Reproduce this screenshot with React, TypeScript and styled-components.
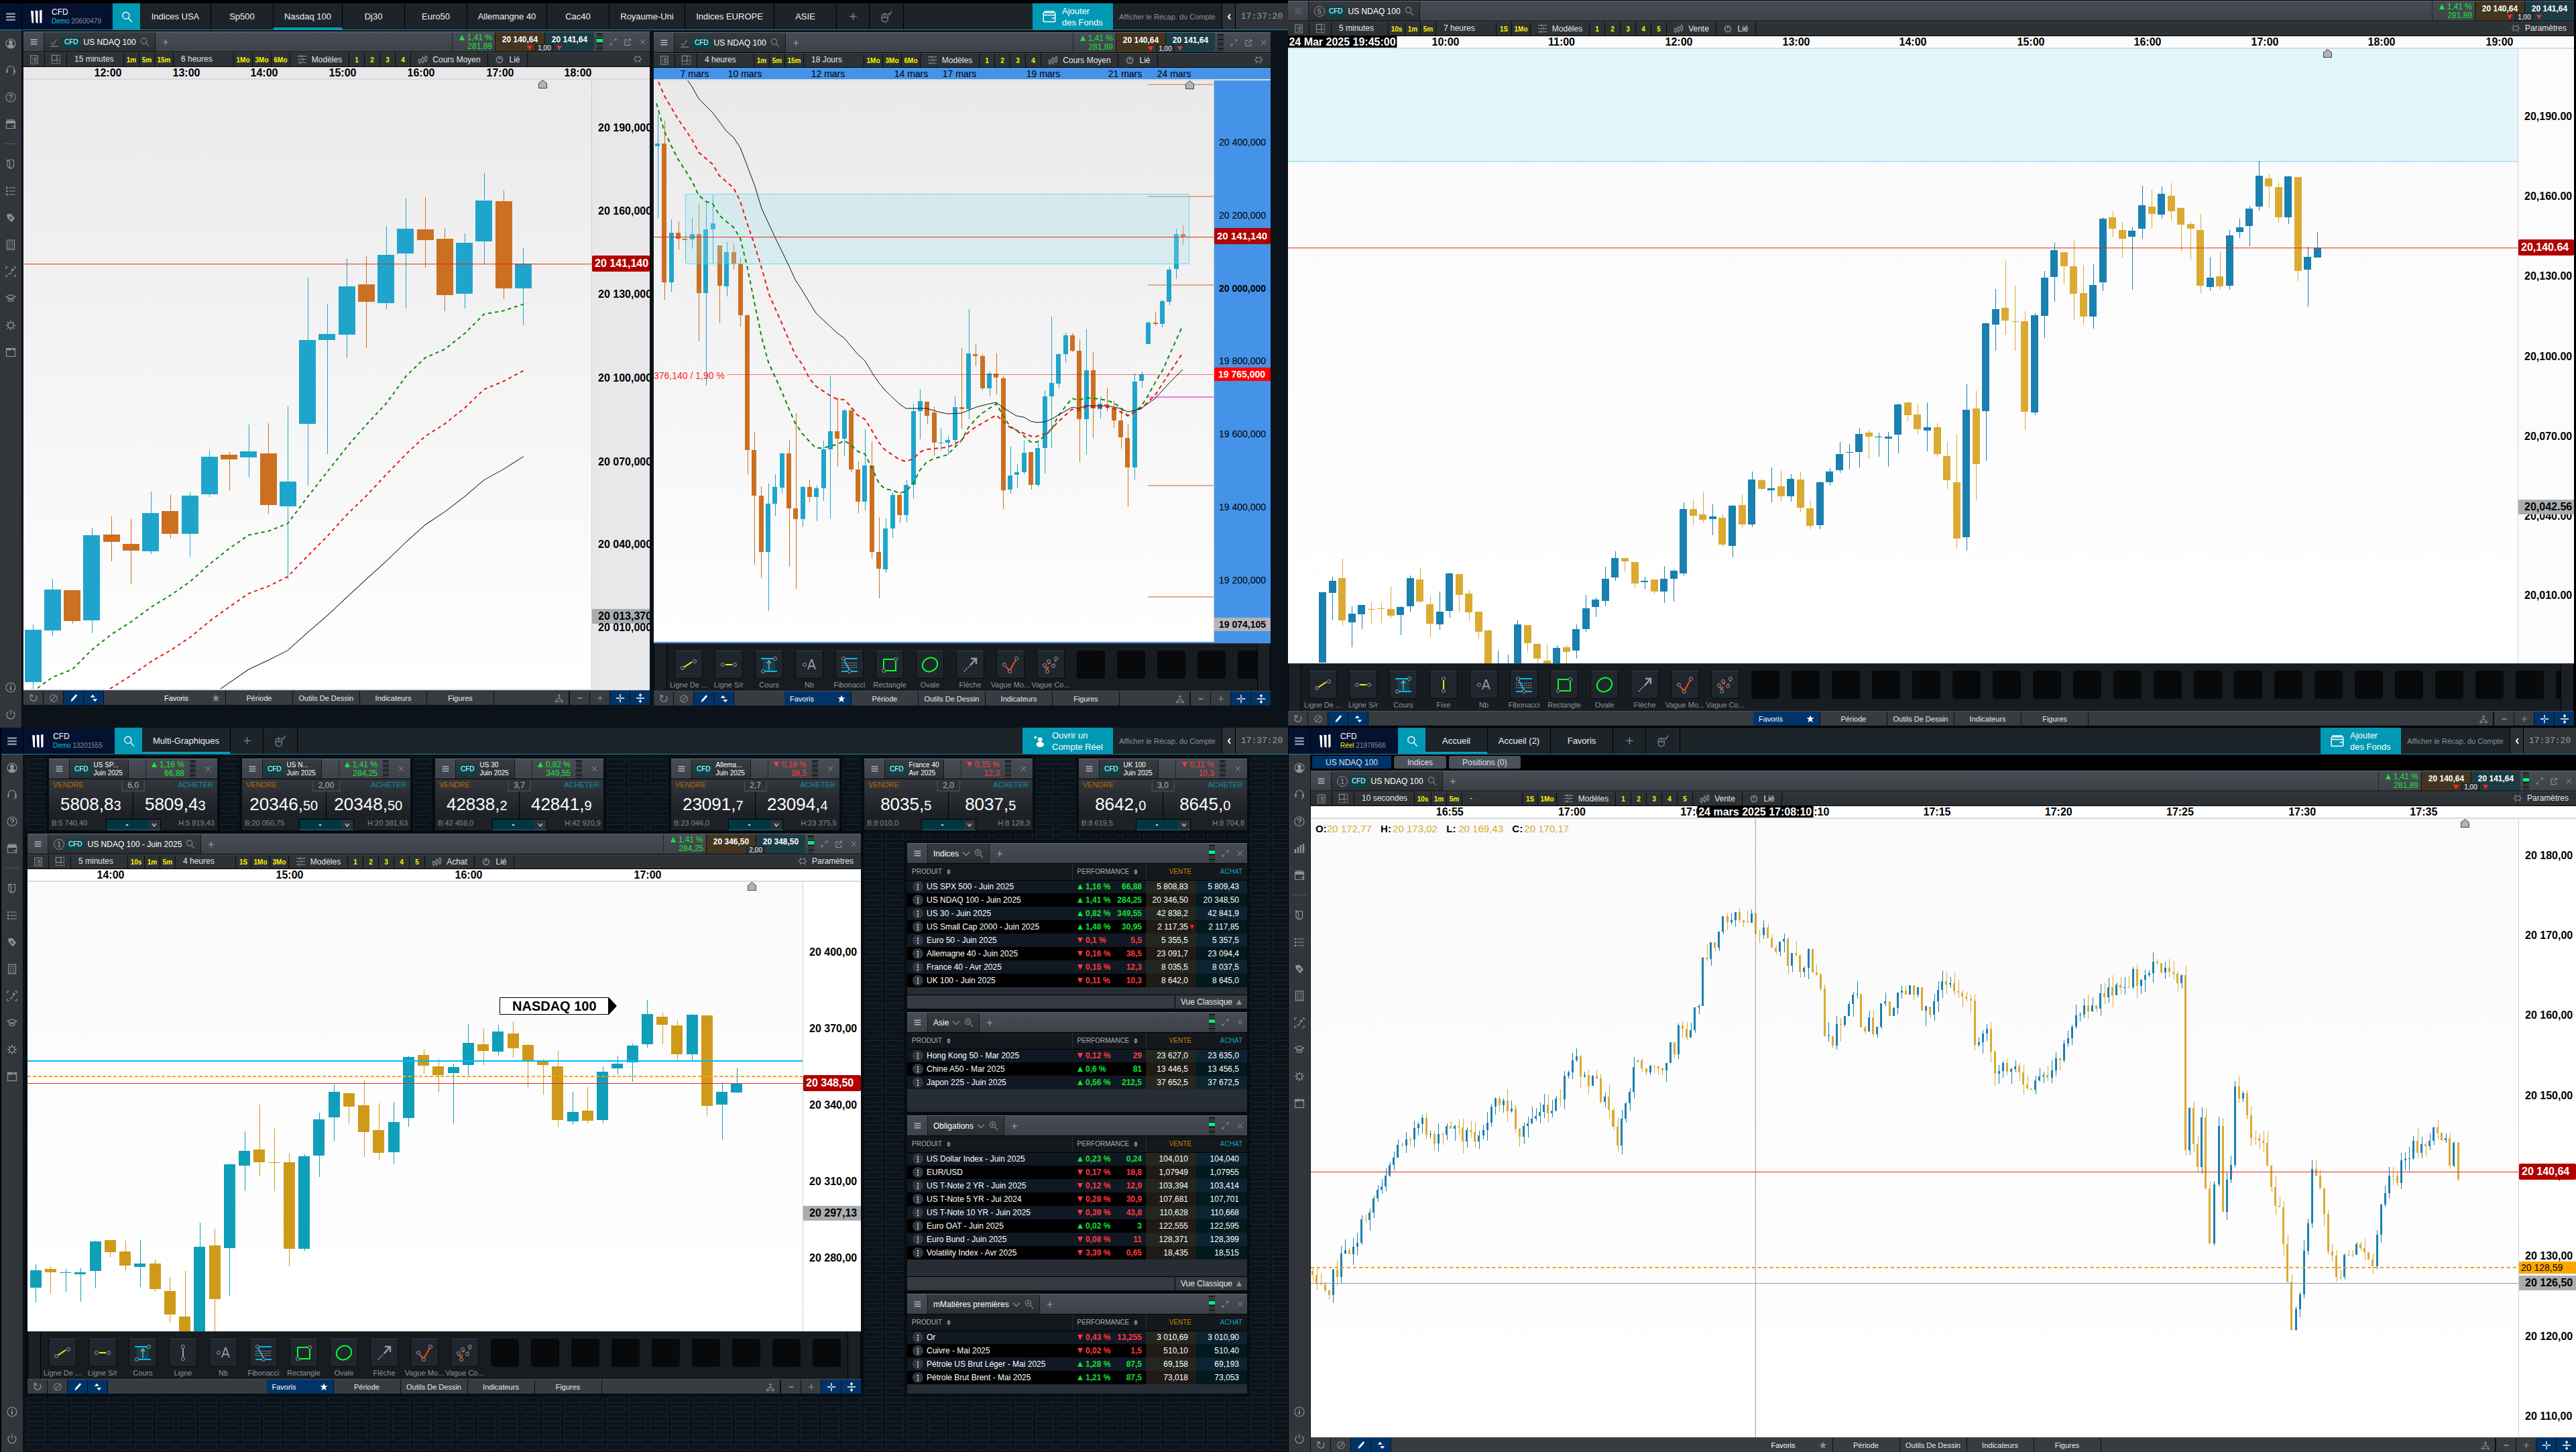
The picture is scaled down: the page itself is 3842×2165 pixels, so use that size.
import React from 'react';
import styled, { createGlobalStyle, css } from 'styled-components';

const GlobalStyle = createGlobalStyle`
  *, *::before, *::after { box-sizing: border-box; }
  body { margin: 0; background: #05080c; font-family: "Liberation Sans", Arial, sans-serif; font-size: 12px; color: #e6e8ea; }
  button, input { font: inherit; color: inherit; border: 0; padding: 0; margin: 0; background: none; }
  a { color: inherit; text-decoration: none; }
  svg { display: block; flex: none; }
`;

/* ---------- icons ---------- */

const iconPaths: Record<string, React.ReactNode> = {
  menu: <path d="M2 4h12M2 8h12M2 12h12" strokeWidth="2" />,
  search: <><circle cx="7" cy="6.5" r="4.5" /><path d="M10.2 9.8L15 15" /></>,
  zoomIn: <><circle cx="7" cy="6.5" r="4.5" /><path d="M10.2 9.8L15 15M5 6.5h4M7 4.5v4" /></>,
  user: <><circle cx="8" cy="8" r="7" /><circle cx="8" cy="6" r="2.4" fill="currentColor" /><path d="M3.5 12.5c1-2.6 2.6-3.2 4.5-3.2s3.5.6 4.5 3.2c-2.4 2.4-6.6 2.4-9 0z" fill="currentColor" /></>,
  headset: <><path d="M2.5 9V7a5.5 5.5 0 0 1 11 0v4a3 3 0 0 1-3 3" /><path d="M2.5 7.5v4M13.5 7.5v4" strokeWidth="2.4" /></>,
  help: <><circle cx="8" cy="8" r="7" /><path d="M5.8 6.4c0-3 4.5-3 4.5-.2C10.3 8 8 7.8 8 9.8M8 11.3v1.4" strokeWidth="1.5" /></>,
  bars: <path d="M2 15V9M6 15V6M10 15V3M14 15V1" strokeWidth="2.4" />,
  card: <><rect x="1.5" y="3.5" width="13" height="11" rx="1" /><path d="M1.5 6.5h13M2 1.8h12M9.5 11h4v3" /><path d="M1.5 5h13" strokeWidth="2.2" /></>,
  ribbon: <><path d="M3 1.5h9.5V11L9 14.5 6.5 12V4z" /><path d="M3 1.5v9L6.5 14.5" /></>,
  list: <><path d="M5.5 3H15M5.5 8H15M5.5 13H15" /><path d="M1 3h2.5M1 8h2.5M1 13h2.5" strokeWidth="2.4" /></>,
  tag: <><path d="M2 2.5l6-1 6 7-5 6-6-7z" fill="currentColor" stroke="none" /><path d="M6 6l4 4M9.5 6.5l-3 3" stroke="#32353a" /></>,
  calc: <><rect x="2.5" y="1" width="11" height="14" /><path d="M4.5 4h7M4.5 7h3M9 7h2.5M4.5 10h3M9 10h2.5M4.5 12.8h3M9 12.8h2.5" /></>,
  scan: <><path d="M1 4V1h3M12 1h3v3M15 12v3h-3M4 15H1v-3" /><path d="M4 11l3 1 4-7M8.5 5.5L11.5 4l.5 3" /></>,
  cap: <path d="M1 5.5L8 2.5l7 3-7 3zM4 7.5V11c2 2 6 2 8 0V7.500M5.500 9.500h5" />,
  gear: <><circle cx="8" cy="8" r="4" /><path d="M8 1v3M8 12v3M1 8h3M12 8h3M3 3l2 2M11 11l2 2M13 3l-2 2M5 11l-2 2" strokeWidth="1.6" /></>,
  hexGear: <path d="M5 4.5h6L13.5 8 11 11.500H5L2.500 8zM5 4.500L3.500 2M11 4.500L12.500 2M5 11.500L3.500 14M11 11.500l1.500 2.500M2.500 8H.5M13.500 8h2" />,
  window: <><rect x="1.5" y="2.5" width="13" height="12" /><path d="M1.5 4h8M11 4h3.5" strokeWidth="2.4" /></>,
  info: <><circle cx="8" cy="8" r="7" /><path d="M8 7v5M8 4v1.5" strokeWidth="2" /></>,
  power: <path d="M4.5 4a6 6 0 1 0 7 0M8 1v7" />,
  plus: <path d="M8 2.5v11M2.5 8h11" strokeWidth="1.6" />,
  minus: <path d="M4 8h8" strokeWidth="2" />,
  mouse: <><rect x="2" y="4" width="8" height="11" rx="4" /><path d="M2 9h8M6 4v5M10.5 3.5l1.5 2 3-5" /></>,
  wallet: <><rect x="1" y="3" width="14" height="11" rx="1" /><path d="M1 6h14M11 9.5h4M2 1.5h12" /></>,
  addUser: <><circle cx="9" cy="6" r="2.6" fill="currentColor" stroke="none" /><ellipse cx="9" cy="12" rx="4.6" ry="3.2" fill="currentColor" stroke="none" /><path d="M1.5 3.5h4M3.5 1.500v4" strokeWidth="1" /></>,
  line: <path d="M2 9l4 3 6-9M1 15h14" />,
  expand: <path d="M9.5 6.5l5-5M11 1.5h3.5V5M6.5 9.5l-5 5M5 14.500H1.500V11" />,
  popout: <path d="M8 3H2.500v11h10V9M7 9l6-6.500M10 2h4v4" />,
  close: <path d="M3 3l10 10M13 3L3 13" />,
  sheet: <><rect x="2" y="1" width="12" height="14" /><path d="M4.5 4.5h1M7 4.5h5M4.5 7h1M7 7h5M4.5 9.500h1M7 9.500h5M4.500 12h1M7 12h5" /></>,
  grid: <><rect x="1.5" y="1.5" width="8" height="8" /><path d="M9.500 1.500h5v13h-13v-5M9.500 9.500v5M9.500 9.500h5" strokeDasharray="1.5 1" /></>,
  sliders: <><path d="M1 3h4M8 3h7M1 8h7M11 8h4M1 13h3M7 13h8" /><path d="M6.500 1v4M9.500 6v4M5.500 11v4" strokeWidth="1.6" /></>,
  candles: <><rect x="1.500" y="8" width="3" height="5" /><rect x="6.500" y="6" width="3" height="6" /><rect x="11.500" y="4" width="3" height="6" /><path d="M3 13v3M8 3v3M8 12v3M13 1v3M13 10v3" /></>,
  link: <><circle cx="8" cy="8" r="5" strokeWidth="2.600" opacity=".7" /><path d="M8 8V4.500" strokeWidth="2" /></>,
  reset: <path d="M4 3.500a5.500 5.500 0 1 0 8 0M1.500 2.500H6v4" strokeWidth="1.6" />,
  ban: <><circle cx="8" cy="8" r="6" /><path d="M12 3.500l-8 9" /></>,
  pencil: <path d="M3 14l1-4 7.500-8.500 2.500 2L6.500 12z" fill="currentColor" stroke="none" />,
  swap: <path d="M2 6.500L6 2l4 4.500zM6 9.500h8L10 14z" fill="currentColor" stroke="none" />,
  star: <path d="M8 .5l2 5.200h5.500L11 9l1.800 6L8 11.500 3.200 15 5 9 .5 5.700H6z" fill="currentColor" stroke="none" />,
  spread: <path d="M8 1v7M5.500 4h5M8 8L3 11.500M8 8l5 3.500M2 13.500h12M4 11.500l-2.500 2L4 15.500M12 11.500l2.500 2-2.500 2" />,
  cross: <path d="M8 1v6M8 9v6M1 8h6M9 8h6" strokeWidth="1.6" />,
  vsplit: <path d="M1 8h14M8 1.500V6M8 10v4.500M6 3.500l2-2.500 2 2.500M6 12.500L8 15l2-2.500" strokeWidth="1.6" />,
};

const Glyph = styled.svg<{ $size: number }>`
  width: ${p => p.$size}px;
  height: ${p => p.$size}px;
  fill: none;
  stroke: currentColor;
  stroke-width: 1.2;
`;

const Icon = ({ name, size = 16 }: { name: string; size?: number }) => (
  <Glyph $size={size} viewBox="0 0 16 16" aria-hidden="true">{iconPaths[name]}</Glyph>
);

/* ---------- page frame ---------- */

const Screen = styled.main`
  display: grid;
  grid-template-columns: 1fr 1fr;
  grid-template-rows: 1085fr 1080fr;
  min-height: 100vh;
  background: #000;
`;

const Workspace = styled.section<{ $pad?: string }>`
  display: flex;
  flex-direction: column;
  min-width: 0;
  padding: ${p => p.$pad || '0'};
  background: #000;
`;

const TopBar = styled.header`
  display: flex;
  height: 40px;
  background: #1c242a;
  border-bottom: 1px solid #1f8694;
`;

const MenuButton = styled.button`
  width: 33px;
  display: grid;
  place-items: center;
  background: #04122f;
  border-right: 1px solid #000;
  color: #9ba1ab;
`;

const Brand = styled.div<{ $width: number }>`
  display: flex;
  align-items: center;
  gap: 14px;
  width: ${p => p.$width}px;
  padding-left: 13px;
  background: #04122f;
  color: #fff;
`;

const BrandText = styled.div`
  font-size: 12px;
  line-height: 13px;
`;

const Account = styled.div<{ $live?: boolean }>`
  font-size: 10px;
  color: #858d9d;
  b { font-weight: 400; color: ${p => (p.$live ? '#ffee00' : '#12c3e6')}; }
`;

const SearchButton = styled.button`
  width: 41px;
  display: grid;
  place-items: center;
  background: #0099b4;
  color: #fff;
`;

const TopTab = styled.a<{ $width: number; $active?: boolean }>`
  display: grid;
  place-items: center;
  width: ${p => p.$width}px;
  border-right: 1px solid #000;
  font-size: 13px;
  color: #eef0f2;
  padding-top: ${p => (p.$active ? 3 : 0)}px;
  ${p => p.$active && css`border-bottom: 3px solid #00a0ba;`}
`;

const TopIcon = styled.button<{ $width: number }>`
  display: grid;
  place-items: center;
  width: ${p => p.$width}px;
  border-right: 1px solid #000;
  color: #7b8188;
`;

const Spacer = styled.div`
  flex: 1;
  min-width: 0;
`;

const CallToAction = styled.button<{ $width: number }>`
  display: flex;
  align-items: center;
  gap: 9px;
  width: ${p => p.$width}px;
  padding-left: 15px;
  background: #0099b4;
  color: #fff;
  font-size: 13px;
  line-height: 17px;
  text-align: left;
  white-space: pre-line;
`;

const Recap = styled.button`
  width: 163px;
  border-right: 1px solid #000;
  font-size: 11px;
  color: #8b9196;
`;

const Collapse = styled.button`
  width: 20px;
  display: grid;
  place-items: center;
  background: #2b3035;
  border-right: 1px solid #000;
  color: #fff;
`;

const Clock = styled.time`
  width: 78px;
  display: grid;
  place-items: center;
  background: #2f3337;
  color: #999da0;
  font-family: "Liberation Mono", monospace;
  font-size: 13px;
`;

type TabDef = { label: string; width: number; active?: boolean };

const Header = ({ brandWidth, account, live, tabs, cta, ctaIcon, ctaWidth }: {
  brandWidth: number; account: string; live?: boolean; tabs: TabDef[]; cta: string; ctaIcon: string; ctaWidth: number;
}) => (
  <TopBar>
    <MenuButton aria-label="Menu"><Icon name="menu" size={18} /></MenuButton>
    <Brand $width={brandWidth}>
      <svg width="17" height="20" viewBox="0 0 17 20" aria-hidden="true">
        <path d="M0 1l4 .5V20L1.500 18.500zM6.500 .5l4 .5v19l-3-1.500zM13 .5l3.500-.5v18.500l-3 1.500z" fill="#fff" />
      </svg>
      <BrandText>
        CFD
        <Account $live={live}><b>{live ? 'Réel' : 'Demo'}</b> {account}</Account>
      </BrandText>
    </Brand>
    <SearchButton aria-label="Rechercher"><Icon name="search" size={18} /></SearchButton>
    {tabs.map(t => <TopTab key={t.label} href="#" $width={t.width} $active={t.active}>{t.label}</TopTab>)}
    <TopIcon $width={49} aria-label="Ajouter"><Icon name="plus" size={15} /></TopIcon>
    <TopIcon $width={51} aria-label="Souris"><Icon name="mouse" size={18} /></TopIcon>
    <Spacer />
    <CallToAction $width={ctaWidth}><Icon name={ctaIcon} size={20} />{cta}</CallToAction>
    <Recap>Afficher le Récap. du Compte</Recap>
    <Collapse aria-label="Réduire">
      <svg width="6" height="8" viewBox="0 0 6 8"><path d="M5 0L2 4l3 4" fill="none" stroke="#fff" strokeWidth="2" /></svg>
    </Collapse>
    <Clock>17:37:20</Clock>
  </TopBar>
);

const Body = styled.div`
  display: flex;
  flex: 1;
  min-height: 0;
`;

const Side = styled.nav`
  display: flex;
  flex-direction: column;
  width: 33px;
  background: #32353a;
  border-right: 1px solid #0a0d10;
  color: #8f9499;
`;

const SideButton = styled.button`
  display: grid;
  place-items: center;
  height: 40px;
`;

const Divider = styled.hr`
  width: 20px;
  height: 1px;
  margin: 9px auto 10px;
  border: 0;
  background: #565a5f;
`;

const Sidebar = ({ live }: { live?: boolean }) => (
  <Side>
    {['user', 'headset', 'help', ...(live ? ['bars'] : []), 'card'].map(n => <SideButton key={n} aria-label={n}><Icon name={n} /></SideButton>)}
    <Divider />
    {['ribbon', 'list', 'tag', 'calc', 'scan', 'cap', 'gear', 'window'].map(n => <SideButton key={n} aria-label={n}><Icon name={n} /></SideButton>)}
    <Spacer />
    {['info', 'power'].map(n => <SideButton key={n} aria-label={n}><Icon name={n} /></SideButton>)}
  </Side>
);

/* ---------- panel chrome ---------- */

const Panel = styled.article`
  display: flex;
  flex-direction: column;
  min-width: 0;
  min-height: 0;
  background: #000;
`;

const PanelHead = styled.header`
  display: flex;
  height: 31px;
  background: linear-gradient(#484d55, #3d4148);
  border-top: 1px solid #666973;
  border-bottom: 1px solid #000;
  color: #9a9ea4;
`;

const Grip = styled.button<{ $dim?: boolean }>`
  display: grid;
  place-items: center;
  width: 31px;
  border-right: 1px solid #17191c;
  color: ${p => (p.$dim ? '#5f646b' : '#b4b8bd')};
`;

const PanelTab = styled.div<{ $width?: number }>`
  display: flex;
  align-items: center;
  gap: 5px;
  width: ${p => (p.$width ? `${p.$width}px` : 'auto')};
  padding: 0 8px 0 ${p => (p.$width ? 4 : 8)}px;
  background: linear-gradient(#373b40, #2b2f33);
  border-right: 1px solid #17191c;
  color: #fff;
  white-space: nowrap;
  > svg { color: #878c92; }
`;

const Badge = styled.span`
  padding: 0 3px;
  border-radius: 3px;
  background: #00474f;
  color: #fff;
  font-size: 10px;
  line-height: 16px;
`;

const Circled = styled.span`
  display: grid;
  place-items: center;
  width: 16px;
  height: 16px;
  margin-right: -2px;
  border: 1px solid #8d9196;
  border-radius: 8px;
  font-size: 11px;
  color: #9ca0a5;
`;

const HeadButton = styled.button<{ $width?: number }>`
  display: grid;
  place-items: center;
  width: ${p => p.$width || 22}px;
  color: #a4a8ad;
`;

const Perf = styled.div<{ $down?: boolean; $width?: number }>`
  width: ${p => p.$width || 64}px;
  padding: 2px 4px 0 0;
  border-left: 1px solid #22252a;
  text-align: right;
  line-height: 13px;
  white-space: nowrap;
  color: ${p => (p.$down ? '#ff3b3b' : '#19e639')};
`;

const Prices = styled.div`
  position: relative;
  display: flex;
`;

const Price = styled.button<{ $buy?: boolean }>`
  width: 74px;
  height: 29px;
  padding-bottom: 8px;
  border-left: 1px solid #111;
  background: ${p => (p.$buy ? '#1c3c45' : '#443520')};
  font-weight: 700;
  color: #fff;
`;

const SpreadTag = styled.span`
  position: absolute;
  left: 50%;
  bottom: 0;
  transform: translateX(-50%);
  padding: 0 3px;
  background: #2e3339;
  border: 1px solid #15181b;
  border-bottom: 0;
  font-size: 10px;
  line-height: 10px;
  color: #f0f2f4;
`;

const Drop = styled.i<{ $right?: boolean }>`
  position: absolute;
  bottom: 2px;
  left: ${p => (p.$right ? 92 : 48)}px;
  border: 4px solid transparent;
  border-top: 7px solid #ff2a2a;
  border-bottom: 0;
`;

const GaugeBox = styled.span`
  display: flex;
  flex-direction: column;
  gap: 1px;
  width: 9px;
  margin: 2px 4px 0;
  i { height: 6px; background: #33373c; border-top: 1px solid #000; }
  i.on { background: #00f07c; }
`;

const Gauge = ({ on }: { on?: boolean }) => (
  <GaugeBox aria-hidden="true"><i /><i className={on ? 'on' : ''} /><i /><i /></GaugeBox>
);

const ToolRow = styled.div`
  display: flex;
  height: 22px;
  background: #2d3236;
  border-top: 1px solid #4a4e53;
  border-bottom: 1px solid #000;
  color: #8d9297;
`;

const ToolCell = styled.button<{ $width: number; $left?: boolean }>`
  display: flex;
  align-items: center;
  justify-content: ${p => (p.$left ? 'flex-start' : 'center')};
  gap: 7px;
  width: ${p => p.$width}px;
  padding: ${p => (p.$left ? '0 0 2px 11px' : '0 0 1px')};
  border-right: 1px solid #0b0d0f;
  white-space: nowrap;
  span { color: #e4e6e8; }
`;

const Quick = styled.button<{ $width?: number }>`
  width: ${p => p.$width || 23}px;
  border-right: 1px solid #0b0d0f;
  font-size: 10px;
  font-weight: 700;
  color: #fff200;
`;

const Settings = styled.button`
  display: flex;
  align-items: center;
  gap: 7px;
  padding: 0 11px 2px;
  span { color: #e4e6e8; }
`;

type ToolbarDef = {
  unit: string; unitWidth: number; quick: [string, number?][]; span: string; spanWidth: number;
  periods: [string, number?][]; models: string[]; price: string; priceWidth: number; settings?: boolean;
};

const Toolbar = ({ d }: { d: ToolbarDef }) => (
  <ToolRow>
    <ToolCell $width={32} aria-label="Liste"><Icon name="sheet" size={14} /></ToolCell>
    <ToolCell $width={33} aria-label="Disposition"><Icon name="grid" size={15} /></ToolCell>
    <ToolCell $width={d.unitWidth} $left><span>{d.unit}</span></ToolCell>
    {d.quick.map(([q, w]) => <Quick key={q} $width={w}>{q}</Quick>)}
    <ToolCell $width={d.spanWidth} $left><span>{d.span}</span></ToolCell>
    {d.periods.map(([q, w]) => <Quick key={q} $width={w}>{q}</Quick>)}
    <ToolCell $width={88}><Icon name="sliders" size={15} /><span>Modèles</span></ToolCell>
    {d.models.map(m => <Quick key={m}>{m}</Quick>)}
    <ToolCell $width={d.priceWidth}><Icon name="candles" size={15} /><span>{d.price}</span></ToolCell>
    <ToolCell $width={59}><Icon name="link" size={14} /><span>Lié</span></ToolCell>
    <Spacer />
    <Settings aria-label="Paramètres"><Icon name="hexGear" size={14} />{d.settings && <span>Paramètres</span>}</Settings>
  </ToolRow>
);

const FootRow = styled.footer`
  display: flex;
  height: 22px;
  background: #373b42;
  border-top: 1px solid #4c5057;
  color: #e8eaec;
`;

const FootIcon = styled.button<{ $on?: boolean; $right?: boolean }>`
  display: grid;
  place-items: center;
  width: 30px;
  ${p => (p.$right ? 'border-left' : 'border-right')}: 1px solid #0e1013;
  background: ${p => (p.$on ? '#003468' : 'transparent')};
  color: ${p => (p.$on ? '#fff' : '#8c9096')};
`;

const FootTabs = styled.div`
  display: flex;
  flex: 1;
  justify-content: center;
`;

const FootTab = styled.button<{ $on?: boolean }>`
  display: flex;
  align-items: center;
  justify-content: center;
  width: 100px;
  border-right: 1px solid #0e1013;
  font-size: 11px;
  background: ${p => (p.$on ? '#003468' : 'transparent')};
  &:first-child { justify-content: space-between; padding: 0 8px; color: #fff; }
  &:first-child svg { color: ${p => (p.$on ? '#fff' : '#8c9096')}; }
`;

const Footer = ({ fav }: { fav?: boolean }) => (
  <FootRow>
    <FootIcon aria-label="Réinitialiser"><Icon name="reset" size={14} /></FootIcon>
    <FootIcon aria-label="Masquer"><Icon name="ban" size={14} /></FootIcon>
    <FootIcon $on aria-label="Dessiner"><Icon name="pencil" size={14} /></FootIcon>
    <FootIcon $on aria-label="Permuter"><Icon name="swap" size={14} /></FootIcon>
    <FootTabs>
      <FootTab $on={fav}>Favoris<Icon name="star" size={12} /></FootTab>
      <FootTab>Période</FootTab>
      <FootTab>Outils De Dessin</FootTab>
      <FootTab>Indicateurs</FootTab>
      <FootTab>Figures</FootTab>
    </FootTabs>
    <FootIcon aria-label="Étendre"><Icon name="spread" size={14} /></FootIcon>
    <FootIcon $right aria-label="Dézoomer"><Icon name="minus" size={14} /></FootIcon>
    <FootIcon $right aria-label="Zoomer"><Icon name="plus" size={12} /></FootIcon>
    <FootIcon $right $on aria-label="Croix"><Icon name="cross" size={14} /></FootIcon>
    <FootIcon $right $on aria-label="Séparer"><Icon name="vsplit" size={14} /></FootIcon>
  </FootRow>
);

/* ---------- drawing tools strip ---------- */

const Strip = styled.div`
  display: flex;
  height: 71px;
  background: #171c20;
  border-top: 1px solid #34383c;
`;

const StripEnd = styled.div`
  width: 20px;
  background: #1b2026;
  border: 1px solid #000;
  border-width: 0 1px;
`;

const StripItems = styled.div`
  display: flex;
  flex: 1;
  gap: 4px;
  min-width: 0;
  overflow: hidden;
  padding: 10px 0 0 4px;
`;

const Tool = styled.button`
  display: flex;
  flex: none;
  flex-direction: column;
  align-items: center;
  gap: 3px;
  width: 56px;
  font-size: 11px;
  line-height: 13px;
  white-space: nowrap;
  color: #8f949b;
`;

const ToolFace = styled.span<{ $empty?: boolean }>`
  display: grid;
  place-items: center;
  width: 42px;
  height: 42px;
  border-radius: 4px;
  background: ${p => (p.$empty ? '#08090a' : '#20262d')};
  border: 1px solid ${p => (p.$empty ? '#08090a' : '#0a0c0e')};
  ${p => !p.$empty && css`border-top-color: #3b4046;`}
`;

const Dot = ({ x, y }: { x: number; y: number }) => <circle cx={x} cy={y} r="2.5" fill="#20262d" stroke="#9a9da1" />;

const toolFaces: Record<string, React.ReactNode> = {
  'Ligne De ...': <><path d="M6 18L18 10" stroke="#ffee00" strokeWidth="2" /><Dot x={4} y={19} /><Dot x={22} y={9} /></>,
  'Ligne S/r': <><path d="M8 14h10" stroke="#ffee00" strokeWidth="2" /><Dot x={4} y={14} /><Dot x={22} y={14} /></>,
  Cours: <><rect x="4" y="6" width="18" height="18" fill="#12414f" /><path d="M1 5h20M5 24h20" stroke="#00b8ff" strokeWidth="2" /><path d="M13 22V8M10 12l3-4 3 4" stroke="#9a9da1" strokeWidth="1.5" /><Dot x={22} y={5} /><Dot x={4} y={24} /></>,
  Fixe: <><path d="M13 8v12" stroke="#ffee00" strokeWidth="2" /><Dot x={13} y={5} /><Dot x={13} y={23} /></>,
  Ligne: <><path d="M13 8v12" stroke="#c9ccd0" strokeWidth="1.5" /><Dot x={13} y={5} /><Dot x={13} y={23} /></>,
  Nb: <><Dot x={6} y={14} /><path d="M11 21l5-14h1l5 14M13 16.500h7" stroke="#9a9da1" strokeWidth="1.8" /></>,
  Fibonacci: <><path d="M4 5h21M1 24h24M4 5l10 19" stroke="#00b8ff" strokeWidth="2" /><path d="M1 11.500h24M1 15h24M1 18.500h24" stroke="#9a9da1" strokeDasharray="2 1" /><Dot x={4} y={5} /><Dot x={13} y={24} /></>,
  Rectangle: <><path d="M4 6h18v17H4z" stroke="#00ff2a" strokeWidth="2" /><Dot x={22} y={6} /><Dot x={4} y={23} /></>,
  Ovale: <ellipse cx="13" cy="14" rx="11.5" ry="10" transform="rotate(-30 13 14)" stroke="#00ff2a" strokeWidth="2" />,
  'Flèche': <><path d="M4 24L14 14" stroke="#9a9da1" strokeWidth="2" strokeDasharray="2 2" /><path d="M13 15l8-9M14 5h8v8" stroke="#9a9da1" strokeWidth="2.4" /></>,
  'Vague Mo...': <><path d="M6 17l6 6 9-16" stroke="#ff4a12" strokeWidth="2" /><Dot x={4} y={14} /><Dot x={12} y={24} /><Dot x={22} y={5} /></>,
  'Vague Co...': <><path d="M4 16l4 6 3-11 6 4 4-8" stroke="#ff4a12" strokeWidth="2" strokeDasharray="5 3" /><Dot x={4} y={15} /><Dot x={8} y={24} /><Dot x={10} y={9} /><Dot x={17} y={16} /><Dot x={21} y={5} /></>,
};

const DrawingTools = ({ names, slots }: { names: string[]; slots: number }) => (
  <Strip>
    <StripEnd />
    <StripItems>
      {names.map(n => (
        <Tool key={n}>
          <ToolFace><svg width="27" height="28" viewBox="0 0 27 28" fill="none" aria-hidden="true">{toolFaces[n]}</svg></ToolFace>
          {n}
        </Tool>
      ))}
      {Array.from({ length: slots }, (_, i) => <Tool key={i} aria-label="Emplacement libre"><ToolFace $empty /></Tool>)}
    </StripItems>
    <StripEnd />
  </Strip>
);

/* ---------- charts ---------- */

const ChartGrid = styled.div<{ $axis: number }>`
  display: grid;
  grid-template-columns: minmax(0, 1fr) ${p => p.$axis}px;
  grid-template-rows: 19px minmax(0, 1fr);
  flex: 1;
  min-height: 0;
  overflow: hidden;
`;

const TimeAxis = styled.div<{ $bg: string }>`
  grid-column: 1 / 3;
  display: grid;
  grid-template-columns: subgrid;
  background: ${p => p.$bg};
  border-bottom: 2px solid #d9dadb;
  overflow: hidden;
`;

const Track = styled.div`
  position: relative;
`;

const TimeLabel = styled.span<{ $light?: boolean; $boxed?: boolean }>`
  position: absolute;
  transform: translateX(-50%);
  white-space: nowrap;
  color: #000;
  font-size: ${p => (p.$light ? 14 : 16)}px;
  font-weight: ${p => (p.$light ? 400 : 700)};
  line-height: 18px;
  ${p => p.$boxed && css`padding: 0 2px; background: #000; color: #fff; z-index: 1; line-height: 17px;`}
`;

const Plot = styled.div<{ $bg: string }>`
  position: relative;
  min-height: 0;
  background: ${p => p.$bg};
  > svg { position: absolute; inset: 0; width: 100%; height: 100%; }
`;

const PriceAxis = styled.div<{ $bg: string }>`
  position: relative;
  background: ${p => p.$bg};
  border-left: 1px solid #cfd0d2;
  overflow: hidden;
`;

type PriceKind = 'plain' | 'light' | 'bold14' | 'last' | 'last14' | 'alert' | 'gray' | 'gray14' | 'amber';

const PriceLabel = styled.span<{ $kind: PriceKind }>`
  position: absolute;
  left: 0;
  right: 0;
  transform: translateY(-50%);
  padding-left: 9px;
  white-space: nowrap;
  color: #000;
  font-size: 16px;
  font-weight: 700;
  line-height: 20px;
  ${p => p.$kind === 'light' && css`font-size: 14px; font-weight: 400; padding-left: 7px;`}
  ${p => p.$kind === 'bold14' && css`font-size: 14px; padding-left: 7px;`}
  ${p => p.$kind === 'gray14' && css`font-size: 14px; padding-left: 7px; background: #b5b3ba;`}
  ${p => p.$kind === 'gray' && css`background: #a9adb0; line-height: 22px;`}
  ${p => p.$kind === 'alert' && css`font-size: 14px; padding-left: 6px; background: #ff0000; color: #fff;`}
  ${p => p.$kind === 'amber' && css`font-size: 14px; font-weight: 400; padding-left: 3px; background: #ffa500; line-height: 18px;`}
  ${p => (p.$kind === 'last' || p.$kind === 'last14') && css`
    padding-left: 4px; background: #b00000; color: #fff; border-radius: 2px; line-height: 24px;`}
  ${p => p.$kind === 'last14' && css`font-size: 15px;`}
`;

const Marker = styled.i`
  position: absolute;
  top: 0;
  width: 13px;
  height: 13px;
  margin-left: -6px;
  background: #444;
  clip-path: polygon(50% 0, 100% 40%, 100% 100%, 0 100%, 0 40%);
  &::after {
    content: "";
    position: absolute;
    inset: 1px;
    background: #b3b3b3;
    clip-path: inherit;
  }
`;

type Candle = { up: boolean; top: number; bottom: number; high: number; low: number };

const parseCandles = (text: string): Candle[] =>
  text.split(';').map(row => {
    const [top, bottom, high, low] = row.slice(1).split(',').map(Number);
    return { up: row[0] === 'u', top, bottom, high, low };
  });

const Candles = ({ data, x0, pitch, width, up, down }: {
  data: Candle[]; x0: number; pitch: number; width: number; up: string; down: string;
}) => (
  <g shapeRendering="crispEdges">
    {data.map((c, i) => {
      const x = x0 + i * pitch;
      return (
        <g key={i} fill={c.up ? up : down}>
          <rect x={Math.round(x)} y={c.high} width="1" height={Math.max(0, c.low - c.high)} />
          <rect x={Math.round(x - width / 2)} y={c.top} width={width} height={Math.max(1, c.bottom - c.top)} />
        </g>
      );
    })}
  </g>
);

const Chart = ({ view, axis, axisBg, plotBg, times, prices, marker, light, children }: {
  view: [number, number, number, number]; axis: number; axisBg: string; plotBg: string;
  times: [string, number, boolean?][]; prices: [string, number, PriceKind?][]; marker: number; light?: boolean; children: React.ReactNode;
}) => {
  const [vx, vy, vw, vh] = view;
  const left = (x: number) => ({ left: `${((x - vx) / vw) * 100}%` });
  return (
    <ChartGrid $axis={axis}>
      <TimeAxis $bg={axisBg}>
        <Track>{times.map(([t, x, boxed]) => <TimeLabel key={t} $light={light} $boxed={boxed} style={left(x)}>{t}</TimeLabel>)}</Track>
      </TimeAxis>
      <Plot $bg={plotBg}>
        <svg viewBox={view.join(' ')} preserveAspectRatio="none">{children}</svg>
        <Marker style={left(marker)} />
      </Plot>
      <PriceAxis $bg={axisBg}>
        {prices.map(([p, y, kind]) => (
          <PriceLabel key={p} $kind={kind || 'plain'} style={{ top: `${((y - vy) / vh) * 100}%` }}>{p}</PriceLabel>
        ))}
      </PriceAxis>
    </ChartGrid>
  );
};

/* ---------- price series ---------- */

const ndaq15m = parseCandles(`u938,1016,930,1026;u878,939,862,948;d879,925,879,929;u797,924,786,943;d796,807,769,836;d810,820,773,870;u764,821,732,825;d761,795,737,802;u738,795,733,829;u680,736,670,740;d677,684,673,730;u672,681,632,710;d675,752,630,765;u717,754,605,863;u507,631,414,723;u498,507,453,676;u427,499,386,534;d424,450,382,519;u380,452,337,461;u341,378,296,460;d342,358,294,399;d356,440,340,464;u362,438,348,460;u299,360,258,393;d300,430,284,446;u393,430,370,485`);

const ndaq4h = parseCandles(`u214,218,170,325;d214,421,180,447;u347,421,327,435;d347,356,330,372;d356,358,345,386;u349,357,325,371;d349,437,303,509;u342,437,300,575;u333,342,291,393;d366,426,366,482;u376,427,361,442;d376,393,363,402;d393,470,385,487;d470,671,469,707;d671,739,644,842;d739,823,725,862;u751,823,721,911;u726,751,707,769;u676,727,675,735;d676,758,656,845;d758,774,616,878;u726,774,725,786;d726,741,715,749;u728,741,724,777;u670,728,657,747;u643,670,560,773;d643,654,593,696;u612,654,610,680;d612,700,607,704;d700,748,688,765;u694,748,640,761;d694,823,658,833;d823,848,771,892;u788,849,773,854;u738,788,734,802;d738,768,734,780;u723,768,716,779;u613,723,602,743;u598,613,580,655;d599,620,599,632;d615,660,606,679;u660,661,638,672;u656,660,650,678;u607,656,591,668;d607,610,519,639;u527,610,461,625;d528,531,512,546;d531,579,528,582;u557,579,554,591;d557,563,527,588;d564,731,561,759;u709,730,666,736;u704,708,692,728;u675,704,657,707;d674,723,674,730;u668,723,660,726;u591,668,582,706;u571,591,472,668;u528,572,527,579;u500,528,496,540;d500,523,497,525;d523,625,506,689;u552,625,491,678;d552,609,524,653;u602,610,591,624;d603,605,578,614;d608,627,597,638;d627,652,609,669;d653,697,633,755;u569,697,557,715;u558,568,554,578;u481,513,479,513;d481,483,465,486;u449,483,447,488;u402,450,398,455;u349,401,341,416;d349,354,336,365`);

const ndaq5m = parseCandles(`u882,987,882,987;u865,883,859,924;d861,924,832,932;u914,927,903,964;u901,915,901,937;d907,908,897,930;d906,907,898,928;d907,917,874,921;u904,916,903,946;u861,903,857,912;d863,896,846,897;d900,929,888,949;u911,930,881,938;u854,910,853,920;d855,886,855,911;d884,912,879,925;d911,941,911,952;d939,988,938,988;u988,988,969,988;u988,988,975,988;u930,988,924,988;d931,958,931,972;d959,981,959,988;d984,988,960,988;u965,988,961,988;d964,971,961,988;u937,969,930,981;u906,937,886,941;u893,904,890,919;u862,895,844,903;u831,860,821,865;d831,836,831,851;d837,869,837,876;u865,867,859,877;d863,881,863,885;u862,881,843,898;u850,862,848,896;u758,854,748,857;d758,768,744,782;d766,774,732,779;u769,773,751,797;d771,811,766,814;u753,813,752,830;d752,781,736,786;u714,781,702,785;d715,728,713,730;u727,730,696,748;d724,739,701,747;u713,739,706,747;d714,756,702,763;d757,783,745,788;u718,782,717,788;u702,718,697,723;u676,700,658,704;u673,674,661,699;u646,673,637,696;d644,650,640,683;u650,651,644,680;u650,653,643,695;u602,647,601,675;d599,618,599,627;d617,639,601,647;u636,641,599,672;d636,676,630,680;d679,715,658,728;d718,802,647,817;u610,800,572,820;d608,691,582,745;u482,612,481,686;u461,484,431,523;d459,478,389,499;d479,480,426,523;d479,613,464,640;u470,614,467,618;u414,471,404,504;u373,413,362,450;d376,397,376,423;d397,438,358,477;d437,472,395,484;u425,472,394,490;u326,421,324,434;d324,341,315,353;d343,356,331,384;u344,353,339,432;u306,341,277,356;d308,319,283,341;u289,320,278,326;d292,315,273,329;d310,335,309,375;d334,341,331,387;d343,426,319,437;u414,428,383,434;d412,427,375,432;u351,426,343,432;u339,346,326,355;u311,337,307,367;u262,308,240,314;d266,278,260,309;d279,324,272,332;u263,324,262,334;d264,404,264,419;u383,402,368,457;u369,384,346,384`);

/* The June contract follows the index on a slightly flatter scale; its premium was smaller earlier in the session. */
const juin5m = ndaq5m.slice(55).map((c, i) => {
  const lag = i <= 17 ? 13 : Math.max(0, 13 - (i - 17) * 1.3);
  const y = (v: number) => Math.round(1615 + (v - 369) * 0.959 + lag);
  return { up: c.up, top: y(c.top), bottom: y(c.bottom), high: y(c.high), low: y(c.low) };
});

/* Ten-second bars built between turning points given as [bar index, level]. */
const barsBetween = (points: [number, number][], seed: number): Candle[] => {
  let state = seed;
  const random = () => {
    state = (state * 1103515245 + 12345) % 2147483648;
    return state / 2147483648;
  };
  const bars: Candle[] = [];
  let open = points[0][1];
  for (let p = 1; p < points.length; p += 1) {
    const [from, a] = points[p - 1];
    const [to, b] = points[p];
    for (let i = from; i < to; i += 1) {
      const close = Math.round(a + ((b - a) * (i + 1 - from)) / (to - from) + (random() - 0.5) * 26);
      const top = Math.min(open, close);
      const bottom = Math.max(open, close);
      bars.push({ up: close < open, top, bottom, high: Math.round(top - random() * 18), low: Math.round(bottom + random() * 18) });
      open = close;
    }
  }
  return bars;
};

const morning = barsBetween([[0, 1895], [3, 1905], [5, 1918], [8, 1880], [12, 1845], [16, 1785], [20, 1735], [24, 1690], [28, 1680], [32, 1702], [35, 1676], [38, 1692], [41, 1690], [44, 1668], [47, 1640], [50, 1660], [52, 1690], [57, 1655], [60, 1665], [64, 1600], [66, 1580], [68, 1612], [71, 1618], [74, 1655], [76, 1700], [79, 1635], [80, 1590]], 7);

const peak = parseCandles(`u1582,1582,1580,1583;d1581,1593,1578,1598;d1593,1599,1593,1603;u1589,1599,1588,1603;d1589,1590,1589,1600;d1590,1593,1590,1603;d1593,1596,1592,1603;u1585,1596,1585,1613;u1554,1585,1554,1585;d1554,1572,1554,1577;u1529,1572,1526,1579;d1529,1534,1523,1547;d1534,1547,1524,1551;u1536,1547,1525,1547;u1502,1536,1502,1540;u1500,1502,1497,1512;u1428,1500,1427,1500;d1428,1430,1408,1433;u1405,1430,1405,1440;d1405,1413,1405,1419;u1389,1413,1389,1418;u1366,1389,1366,1393;d1366,1375,1362,1387;u1372,1375,1362,1378;u1360,1372,1360,1382;d1360,1372,1354,1376;d1372,1375,1372,1382;d1375,1376,1358,1376;u1362,1376,1356,1376;d1362,1393,1362,1393;d1393,1394,1386,1406;u1383,1394,1372,1400;d1383,1399,1377,1399;d1399,1413,1393,1413;d1413,1419,1410,1423;u1404,1419,1404,1426;u1400,1404,1392,1420;d1400,1440,1397,1452;u1421,1440,1421,1449;d1421,1424,1403,1426;d1424,1449,1424,1458;u1443,1449,1441,1457;u1415,1443,1414,1460;d1415,1450,1415,1450;d1450,1453,1438,1455;d1453,1474,1451,1478;d1474,1545,1468,1545;u1544,1545,1524,1553;d1545,1559,1545,1563;u1527,1559,1515,1565;d1527,1528,1518,1553;u1515,1528,1515,1531;u1497,1515,1493,1515;u1483,1497,1479,1516;u1482,1483,1463,1489;d1482,1532,1482,1532;d1532,1538,1529,1542;u1517,1538,1507,1538;d1517,1542,1506,1546;u1531,1542,1531,1547;u1496,1531,1496,1534;u1493,1496,1480,1500;d1493,1515,1493,1515;u1503,1515,1501,1515;u1480,1503,1480,1512;u1477,1480,1470,1489;d1477,1483,1470,1483;u1469,1483,1469,1483;d1469,1483,1469,1492;u1472,1483,1472,1487;d1472,1507,1472,1507;u1500,1507,1500,1530;d1501,1513,1501,1518`);

const afternoon = barsBetween([[153, 1513], [154, 1485], [157, 1468], [160, 1480], [163, 1500], [164, 1568], [167, 1530], [169, 1590], [172, 1592], [174, 1600], [178, 1620], [181, 1615], [183, 1600], [185, 1568], [187, 1535], [190, 1505], [194, 1495], [197, 1478], [200, 1465], [203, 1458], [205, 1468], [208, 1445], [209, 1432], [212, 1450], [215, 1460], [216, 1715], [217, 1650], [219, 1745], [220, 1660], [222, 1860], [224, 1690], [225, 1800], [227, 1730], [228, 1620], [230, 1635], [232, 1690], [235, 1715], [237, 1770], [239, 1805], [241, 1900], [242, 1975], [244, 1920], [246, 1830], [247, 1755], [249, 1775], [251, 1860], [253, 1910], [255, 1875], [258, 1862], [262, 1885], [264, 1800], [266, 1745], [268, 1755], [271, 1715], [275, 1702], [278, 1680], [280, 1695], [281, 1742], [282, 1705], [283, 1747]], 21);

const ndaq10s = [...morning, ...peak, ...afternoon];

/* ---------- quote tiles ---------- */

const Desk = styled.div`
  --bg: #0b131b;
  --ln: #1d262f;
  flex: 1;
  display: grid;
  grid-template-columns: repeat(auto-fill, 32px);
  grid-auto-rows: 14px;
  margin: 6px 0 0 6px;
  background-color: var(--bg);
  background-image:
    linear-gradient(to right, transparent 27px, var(--bg) 27px),
    linear-gradient(to bottom, transparent 9px, var(--bg) 9px),
    linear-gradient(to right, var(--ln) 1px, transparent 1px, transparent 26px, var(--ln) 26px),
    linear-gradient(to bottom, var(--ln) 1px, transparent 1px, transparent 8px, var(--ln) 8px);
  background-size: 32px 14px;
`;

const DeskFrame = styled.div`
  display: flex;
  flex: 1;
  min-width: 0;
  background: #0b131b;
`;

const Placed = styled.div<{ $col: number; $cols: number; $row: number; $rows: number }>`
  grid-column: ${p => p.$col} / span ${p => p.$cols};
  grid-row: ${p => p.$row} / span ${p => p.$rows};
  display: flex;
  flex-direction: column;
  min-width: 0;
  margin: 0 5px 5px 0;
  box-shadow: 0 0 6px 2px #05090d;
  background: #272d34;
  > * { flex: 1; }
`;

const TileFrame = styled.div`
  display: flex;
  flex-direction: column;
`;

const TileName = styled.span`
  font-size: 10px;
  line-height: 12px;
`;

const TileHead = styled(PanelHead)`
  flex: none;
`;

const TileBody = styled.div`
  position: relative;
  flex: 1;
  display: grid;
  grid-template-columns: 1fr 1fr;
  grid-template-rows: 16px 1fr 17px;
  background: linear-gradient(#33373d, #1d2126 70%);
`;

const TileSide = styled.span<{ $buy?: boolean }>`
  padding: 2px 6px 0;
  font-size: 11px;
  color: ${p => (p.$buy ? '#0092a8' : '#b56b00')};
  text-align: ${p => (p.$buy ? 'right' : 'left')};
`;

const Quote = styled.button<{ $first?: boolean }>`
  font-size: 26px;
  color: #fff;
  border-right: ${p => (p.$first ? '1px solid #000' : '0')};
  small { font-size: 20px; }
`;

const Extreme = styled.span<{ $right?: boolean }>`
  padding: 0 4px;
  font-size: 11px;
  line-height: 13px;
  color: #84888d;
  text-align: ${p => (p.$right ? 'right' : 'left')};
`;

const TileSpread = styled.span`
  position: absolute;
  left: 50%;
  top: 2px;
  transform: translateX(-50%);
  padding: 0 8px;
  background: #2e3237;
  border: 1px solid #55585d;
  border-width: 0 1px 1px;
  color: #b0b4b9;
  line-height: 15px;
`;

const Combo = styled.div`
  position: absolute;
  left: 50%;
  bottom: 0;
  display: flex;
  width: 82px;
  height: 17px;
  transform: translateX(-50%);
  border: 1px solid #000;
  border-bottom-color: #2a6f7c;
  input { width: 62px; background: #003742; text-align: center; color: #fff; font-size: 12px; font-weight: 700; }
  button { flex: 1; display: grid; place-items: center; background: #283038; }
`;

type TileDef = { col: number; name: string; month: string; down?: boolean; pct: string; pts: string; spread: string; sell: [string, string]; buy: [string, string]; low: string; high: string };

const tiles: TileDef[] = [
  { col: 2, name: 'US SP...', month: 'Juin 2025', pct: '1,16 %', pts: '66,88', spread: '6,0', sell: ['5808,8', '3'], buy: ['5809,4', '3'], low: '5 740,40', high: '5 819,43' },
  { col: 11, name: 'US N...', month: 'Juin 2025', pct: '1,41 %', pts: '284,25', spread: '2,00', sell: ['20346,', '50'], buy: ['20348,', '50'], low: '20 050,75', high: '20 381,63' },
  { col: 20, name: 'US 30', month: 'Juin 2025', pct: '0,82 %', pts: '349,55', spread: '3,7', sell: ['42838,', '2'], buy: ['42841,', '9'], low: '42 458,0', high: '42 920,9' },
  { col: 31, name: 'Allema...', month: 'Juin 2025', down: true, pct: '0,16 %', pts: '38,5', spread: '2,7', sell: ['23091,', '7'], buy: ['23094,', '4'], low: '23 046,0', high: '23 375,5' },
  { col: 40, name: 'France 40', month: 'Avr 2025', down: true, pct: '0,15 %', pts: '12,3', spread: '2,0', sell: ['8035,', '5'], buy: ['8037,', '5'], low: '8 010,0', high: '8 128,3' },
  { col: 50, name: 'UK 100', month: 'Juin 2025', down: true, pct: '0,11 %', pts: '10,3', spread: '3,0', sell: ['8642,', '0'], buy: ['8645,', '0'], low: '8 619,5', high: '8 704,8' },
];

const Tri = styled.i<{ $down?: boolean }>`
  display: inline-block;
  margin-right: 4px;
  border: 4px solid transparent;
  ${p => (p.$down ? css`border-top: 8px solid currentColor; border-bottom: 0;` : css`border-bottom: 8px solid currentColor; border-top: 0;`)}
`;

const Tile = ({ t }: { t: TileDef }) => (
  <Placed $col={t.col} $cols={8} $row={1} $rows={8}>
    <TileFrame>
      <TileHead>
        <Grip aria-label="Menu"><Icon name="menu" size={13} /></Grip>
        <PanelTab $width={88}><Badge>CFD</Badge><TileName>{t.name}<br />{t.month}</TileName></PanelTab>
        <Spacer />
        <Perf $down={t.down} $width={62}><Tri $down={t.down} />{t.pct}<br />{t.pts}</Perf>
        <Gauge />
        <HeadButton $width={28} aria-label="Fermer"><Icon name="close" size={11} /></HeadButton>
      </TileHead>
      <TileBody>
        <TileSide>VENDRE</TileSide><TileSide $buy>ACHETER</TileSide>
        <Quote $first>{t.sell[0]}<small>{t.sell[1]}</small></Quote>
        <Quote>{t.buy[0]}<small>{t.buy[1]}</small></Quote>
        <Extreme>B:{t.low}</Extreme><Extreme $right>H:{t.high}</Extreme>
        <TileSpread>{t.spread}</TileSpread>
        <Combo>
          <input aria-label={`Quantité ${t.name}`} defaultValue="-" />
          <button aria-label="Choisir"><svg width="8" height="6" viewBox="0 0 8 6"><path d="M1 1l3 4 3-4" fill="none" stroke="#b9bdc1" strokeWidth="1.5" /></svg></button>
        </Combo>
      </TileBody>
    </TileFrame>
  </Placed>
);

/* ---------- watch lists ---------- */

const ListTable = styled.table`
  flex: none;
  width: 100%;
  border-collapse: collapse;
  table-layout: fixed;
  tbody tr:nth-child(odd) { background: #101823; }
  tbody tr:nth-child(even) { background: #000; }
  tbody tr:nth-child(odd) td:nth-child(3) { background: #23271f; }
  tbody tr:nth-child(even) td:nth-child(3) { background: #201a16; }
  tbody tr:nth-child(odd) td:nth-child(4) { background: #0c2431; }
  tbody tr:nth-child(even) td:nth-child(4) { background: #02191d; }
`;

const Th = styled.th<{ $color?: string; $end?: boolean; $width?: number }>`
  width: ${p => (p.$width ? `${p.$width}px` : 'auto')};
  height: 24px;
  padding: 0 7px;
  background: #14171b;
  border-right: ${p => (p.$end ? '0' : '1px solid #2a2e33')};
  border-bottom: 1px solid #000;
  font-size: 10px;
  font-weight: 400;
  text-align: ${p => (p.$end ? 'right' : 'left')};
  color: ${p => p.$color || '#aaaeb3'};
  svg { display: inline-block; margin-left: 7px; vertical-align: -1px; }
`;

const Td = styled.td<{ $num?: boolean }>`
  height: 20px;
  padding: ${p => (p.$num ? '0 12px 1px 0' : '0 6px 0 8px')};
  text-align: ${p => (p.$num ? 'right' : 'left')};
  white-space: nowrap;
  color: #fff;
`;

const Product = styled.span`
  display: flex;
  align-items: center;
  gap: 5px;
`;

const Dots = styled.button`
  width: 16px;
  height: 16px;
  display: grid;
  place-items: center;
  border-radius: 8px;
  background: #33373b;
`;

const Change = styled.span<{ $down: boolean }>`
  display: flex;
  align-items: center;
  font-weight: 700;
  color: ${p => (p.$down ? '#ff3a3a' : '#14e032')};
  b { margin-left: auto; }
`;

const Ticked = styled.span`
  position: relative;
  &::after {
    content: "";
    position: absolute;
    left: 100%;
    top: 4px;
    margin-left: 3px;
    border: 3px solid transparent;
    border-top: 7px solid #ff2020;
    border-bottom: 0;
  }
`;

const ListFoot = styled.footer`
  display: flex;
  justify-content: flex-end;
  height: 21px;
  margin-top: auto;
  background: #373b41;
  border-top: 1px solid #000;
  button { display: flex; align-items: center; gap: 6px; padding: 0 8px; border-left: 1px solid #000; color: #e4e6e8; }
  i { margin: 0; color: #8c9096; }
`;

const ListBox = styled.div`
  display: flex;
  flex-direction: column;
`;

const SortMark = () => (
  <svg width="6" height="8" viewBox="0 0 6 8"><path d="M0 3.5L3 0l3 3.5zM0 4.5h6L3 8z" fill="#9a9ea3" /></svg>
);

const WatchList = ({ row, rows, title, foot, data, ticked }: { row: number; rows: number; title: string; foot?: boolean; data: string[][]; ticked?: string }) => (
  <Placed $col={42} $cols={16} $row={row} $rows={rows}>
    <ListBox>
      <TileHead>
        <Grip aria-label="Menu"><Icon name="menu" size={13} /></Grip>
        <PanelTab>
          {title}
          <svg width="12" height="8" viewBox="0 0 12 8"><path d="M1 1.5l5 5 5-5" fill="none" stroke="#878c92" strokeWidth="1.3" /></svg>
          <Icon name="zoomIn" size={15} />
        </PanelTab>
        <HeadButton $width={30} aria-label="Ajouter"><Icon name="plus" size={12} /></HeadButton>
        <Spacer />
        <Gauge on />
        <HeadButton aria-label="Agrandir"><Icon name="expand" size={11} /></HeadButton>
        <HeadButton aria-label="Fermer"><Icon name="close" size={11} /></HeadButton>
      </TileHead>
      <ListTable>
        <thead>
          <tr>
            <Th>PRODUIT<SortMark /></Th>
            <Th $width={110}>PERFORMANCE<SortMark /></Th>
            <Th $width={75} $end $color="#cf8200">VENTE</Th>
            <Th $width={76} $end $color="#0aa6c0">ACHAT</Th>
          </tr>
        </thead>
        <tbody>
          {data.map(([name, dir, pct, pts, sell, buy]) => (
            <tr key={name}>
              <Td>
                <Product>
                  <Dots aria-label={`Options ${name}`}><svg width="2" height="9" viewBox="0 0 2 9"><path d="M0 0h2v2H0zM0 3.5h2v2H0zM0 7h2v2H0z" fill="#d0d2d4" /></svg></Dots>
                  {name}
                </Product>
              </Td>
              <Td><Change $down={dir === 'd'}><Tri $down={dir === 'd'} />{pct}<b>{pts}</b></Change></Td>
              <Td $num>{name === ticked ? <Ticked>{sell}</Ticked> : sell}</Td>
              <Td $num>{buy}</Td>
            </tr>
          ))}
        </tbody>
      </ListTable>
      {foot && <ListFoot><button>Vue Classique <Tri /></button></ListFoot>}
    </ListBox>
  </Placed>
);

const indices = [
  ['US SPX 500 - Juin 2025', 'u', '1,16 %', '66,88', '5 808,83', '5 809,43'],
  ['US NDAQ 100 - Juin 2025', 'u', '1,41 %', '284,25', '20 346,50', '20 348,50'],
  ['US 30 - Juin 2025', 'u', '0,82 %', '349,55', '42 838,2', '42 841,9'],
  ['US Small Cap 2000 - Juin 2025', 'u', '1,48 %', '30,95', '2 117,35', '2 117,85'],
  ['Euro 50 - Juin 2025', 'd', '0,1 %', '5,5', '5 355,5', '5 357,5'],
  ['Allemagne 40 - Juin 2025', 'd', '0,16 %', '38,5', '23 091,7', '23 094,4'],
  ['France 40 - Avr 2025', 'd', '0,15 %', '12,3', '8 035,5', '8 037,5'],
  ['UK 100 - Juin 2025', 'd', '0,11 %', '10,3', '8 642,0', '8 645,0'],
];
const asie = [
  ['Hong Kong 50 - Mar 2025', 'd', '0,12 %', '29', '23 627,0', '23 635,0'],
  ['Chine A50 - Mar 2025', 'u', '0,6 %', '81', '13 446,5', '13 456,5'],
  ['Japon 225 - Juin 2025', 'u', '0,56 %', '212,5', '37 652,5', '37 672,5'],
];
const obligations = [
  ['US Dollar Index - Juin 2025', 'u', '0,23 %', '0,24', '104,010', '104,040'],
  ['EUR/USD', 'd', '0,17 %', '18,8', '1,07949', '1,07955'],
  ['US T-Note 2 YR - Juin 2025', 'd', '0,12 %', '12,9', '103,394', '103,414'],
  ['US T-Note 5 YR - Jui 2024', 'd', '0,28 %', '30,9', '107,681', '107,701'],
  ['US T-Note 10 YR - Juin 2025', 'd', '0,39 %', '43,8', '110,628', '110,668'],
  ['Euro OAT - Juin 2025', 'u', '0,02 %', '3', '122,555', '122,595'],
  ['Euro Bund - Juin 2025', 'd', '0,08 %', '11', '128,371', '128,399'],
  ['Volatility Index - Avr 2025', 'd', '3,39 %', '0,65', '18,435', '18,515'],
];
const matieres = [
  ['Or', 'd', '0,43 %', '13,255', '3 010,69', '3 010,90'],
  ['Cuivre - Mai 2025', 'd', '0,02 %', '1,5', '510,10', '510,40'],
  ['Pétrole US Brut Léger - Mai 2025', 'u', '1,28 %', '87,5', '69,158', '69,193'],
  ['Pétrole Brut Brent - Mai 2025', 'u', '1,21 %', '87,5', '73,018', '73,053'],
];

/* ---------- chart panel header ---------- */

const ChartHead = ({ name, lead, dimGrip, add = true, pts = '281,89', sell = '20 140,64', buy = '20 141,64', spread = '1,00', drops = true, tools = true, gauge }: {
  name: string; lead: React.ReactNode; dimGrip?: boolean; add?: boolean; pts?: string; sell?: string; buy?: string; spread?: string; drops?: boolean; tools?: boolean; gauge?: boolean;
}) => (
  <PanelHead>
    <Grip $dim={dimGrip} aria-label="Menu"><Icon name="menu" size={13} /></Grip>
    <PanelTab>{lead}<Badge>CFD</Badge>{name}<Icon name="search" size={15} /></PanelTab>
    {add && <HeadButton $width={30} aria-label="Ajouter"><Icon name="plus" size={12} /></HeadButton>}
    <Spacer />
    <Perf><Tri />1,41 %<br />{pts}</Perf>
    <Prices>
      <Price>{sell}</Price>
      <Price $buy>{buy}</Price>
      {drops && <Drop />}
      <SpreadTag>{spread}</SpreadTag>
      {drops && <Drop $right />}
    </Prices>
    {tools && (
      <>
        <Gauge on={gauge} />
        <HeadButton aria-label="Agrandir"><Icon name="expand" size={11} /></HeadButton>
        <HeadButton aria-label="Détacher"><Icon name="popout" size={12} /></HeadButton>
        <HeadButton aria-label="Fermer"><Icon name="close" size={11} /></HeadButton>
      </>
    )}
  </PanelHead>
);

const TwoCharts = styled.div`
  display: grid;
  grid-template-columns: 934fr 920fr;
  gap: 6px;
  flex: 1;
  min-width: 0;
  padding: 2px 26px 34px 2px;
  background: #0b121a;
`;

const Lowered = styled(Panel)`
  margin: 1px 0 -1px;
`;

const Baseline = styled.div<{ $color: string }>`
  height: 2px;
  background: ${p => p.$color};
`;

const PageTabs = styled.div`
  display: flex;
  gap: 4px;
  height: 24px;
  padding: 2px 2px 3px;
`;

const PageTab = styled.button<{ $on?: boolean }>`
  padding: 0 20px;
  border-radius: 3px;
  background: ${p => (p.$on ? '#003468' : '#4b515a')};
  color: #dfe2e5;
`;

const Fill = styled.div`
  display: flex;
  flex: 1;
  flex-direction: column;
  min-width: 0;
  > article { flex: 1; }
`;

const baseTools = ['Nb', 'Fibonacci', 'Rectangle', 'Ovale', 'Flèche', 'Vague Mo...', 'Vague Co...'];

export default function App() {
  return (
    <Screen>
      <GlobalStyle />

      <Workspace $pad="5px 0 0">
        <Header
          brandWidth={135}
          account="20600479"
          ctaWidth={120}
          cta={'Ajouter\ndes Fonds'}
          ctaIcon="wallet"
          tabs={[
            { label: 'Indices USA', width: 106 }, { label: 'Sp500', width: 93 }, { label: 'Nasdaq 100', width: 103, active: true },
            { label: 'Dj30', width: 93 }, { label: 'Euro50', width: 93 }, { label: 'Allemangne 40', width: 119 }, { label: 'Cac40', width: 93 },
            { label: 'Royaume-Uni', width: 113 }, { label: 'Indices EUROPE', width: 133 }, { label: 'ASIE', width: 93 },
          ]}
        />
        <Body>
          <Sidebar />
          <TwoCharts>
            <Panel>
              <ChartHead name="US NDAQ 100" lead={<Icon name="line" size={14} />} gauge />
              <Toolbar d={{ unit: '15 minutes', unitWidth: 85, quick: [['1m'], ['5m'], ['15m', 28]], span: '6 heures', spanWidth: 90, periods: [['1Mo', 28], ['3Mo', 28], ['6Mo', 28]], models: ['1', '2', '3', '4'], price: 'Cours Moyen', priceWidth: 115 }} />
              <Chart
                view={[35, 119, 847, 907]}
                axis={87}
                axisBg="#e8e8ea"
                plotBg="linear-gradient(#eaeaea, #fff)"
                marker={809}
                times={[['12:00', 161], ['13:00', 278], ['14:00', 394], ['15:00', 511], ['16:00', 628], ['17:00', 746], ['18:00', 862]]}
                prices={[['20 190,000', 191], ['20 160,000', 315], ['20 130,000', 439], ['20 100,000', 564], ['20 070,000', 688], ['20 040,000', 811], ['20 013,370', 918, 'gray'], ['20 010,000', 935], ['20 141,140', 393, 'last']]}
              >
                <Candles data={ndaq15m} x0={49} pitch={29.25} width={25} up="#1fa5cc" down="#cb7020" />
                <polyline fill="none" stroke="#0a8a0a" strokeWidth="2" strokeDasharray="5 5" points="56,1025 78,1009 108,997 137,968 166,945 196,926 226,904 254,887 284,866 313,840 342,817 371,797 401,791 429,780 459,740 488,703 518,665 546,633 576,601 606,560 634,533 664,520 694,496 722,468 751,463 781,453" />
                <polyline fill="none" stroke="#f01414" strokeWidth="2" strokeDasharray="5 5" points="164,1026 196,1006 226,985 254,969 284,949 313,925 342,904 371,884 401,873 429,859 459,828 488,799 518,766 546,739 576,707 606,676 634,650 664,631 694,607 722,580 751,568 781,552" />
                <polyline fill="none" stroke="#222" points="329,1026 371,997 401,983 429,969 459,942 488,917 518,889 546,863 576,836 606,807 634,782 664,762 694,739 722,715 751,699 781,680" />
                <path d="M35 393.500h847" stroke="#e8281e" />
              </Chart>
              <Baseline $color="#e8e8ea" />
              <Footer />
            </Panel>

            <Lowered>
              <ChartHead name="US NDAQ 100" lead={<Icon name="line" size={14} />} />
              <Toolbar d={{ unit: '4 heures', unitWidth: 85, quick: [['1m'], ['5m'], ['15m', 28]], span: '18 Jours', spanWidth: 90, periods: [['1Mo', 28], ['3Mo', 28], ['6Mo', 28]], models: ['1', '2', '3', '4'], price: 'Cours Moyen', priceWidth: 115 }} />
              <Chart
                view={[975, 120, 835, 837]}
                axis={85}
                axisBg="#4593e8"
                plotBg="linear-gradient(#e9e9e9, #fff)"
                marker={1774}
                light
                times={[['7 mars', 1036], ['10 mars', 1111], ['12 mars', 1235], ['14 mars', 1359], ['17 mars', 1431], ['19 mars', 1556], ['21 mars', 1678], ['24 mars', 1751]]}
                prices={[['20 400,000', 212, 'light'], ['20 200,000', 321, 'light'], ['20 000,000', 430, 'bold14'], ['19 800,000', 538, 'light'], ['19 600,000', 647, 'light'], ['19 400,000', 756, 'light'], ['19 200,000', 865, 'light'], ['19 074,105', 931, 'gray14'], ['19 765,000', 558, 'alert'], ['20 141,140', 352, 'last14']]}
              >
                <g stroke="#dcae8a" strokeWidth="2"><path d="M1712 126h98M1712 293h98M1712 425h98M1712 724h98M1712 890h98" /><path d="M1712 592h98" stroke="#f57af5" /></g>
                <Candles data={ndaq4h} x0={980.6} pitch={10.313} width={7} up="#1fa5cc" down="#cb7020" />
                <rect x="1022.5" y="289.5" width="751" height="104" fill="#9be4f0" fillOpacity=".28" stroke="#27d3f2" strokeDasharray="2 1" />
                <polyline fill="none" stroke="#0a8a0a" strokeWidth="2" strokeDasharray="6 5" points="979,154 991,196 1001,217 1011,237 1022,254 1032,270 1042,291 1052,300 1063,304 1073,321 1083,330 1094,339 1104,355 1114,396 1125,450 1136,503 1146,540 1166,584 1176,608 1186,631 1197,647 1207,658 1217,668 1228,668 1238,665 1248,663 1259,657 1269,663 1279,673 1290,677 1301,699 1311,721 1320,729 1331,731 1341,735 1351,733 1362,721 1372,701 1382,689 1393,684 1403,681 1413,678 1424,667 1434,657 1444,638 1456,624 1465,616 1486,602 1496,620 1506,635 1516,642 1527,650 1537,659 1547,659 1558,650 1568,641 1578,621 1589,606 1599,594 1609,597 1619,593 1641,595 1651,597 1661,601 1671,607 1682,620 1692,614 1702,606 1712,590 1723,570 1734,552 1743,532 1764,485" />
                <polyline fill="none" stroke="#f01414" strokeWidth="2" strokeDasharray="6 5" points="982,122 991,143 1011,177 1022,193 1032,208 1042,227 1063,245 1073,262 1094,280 1104,300 1114,332 1125,364 1136,400 1147,439 1166,482 1186,529 1197,544 1207,564 1217,576 1238,590 1248,595 1259,596 1269,606 1279,619 1290,625 1301,643 1311,660 1320,671 1331,678 1341,685 1351,688 1362,684 1372,674 1382,670 1403,668 1413,667 1424,662 1434,656 1444,645 1456,636 1465,631 1486,619 1496,628 1506,637 1527,646 1542,652 1558,647 1568,640 1578,629 1589,619 1599,610 1609,612 1619,607 1651,607 1661,609 1671,614 1682,620 1702,609 1723,589 1735,570 1743,558 1762,529" />
                <polyline fill="none" stroke="#111" points="1025,119 1032,129 1042,147 1063,168 1083,195 1094,205 1104,220 1125,275 1136,311 1156,354 1176,395 1186,417 1197,434 1217,467 1248,496 1259,504 1279,528 1290,538 1302,558 1311,571 1320,582 1341,602 1351,609 1382,609 1403,615 1413,617 1434,616 1444,612 1456,607 1476,602 1486,600 1496,608 1516,620 1527,622 1537,628 1547,630 1558,629 1568,625 1599,607 1609,609 1619,605 1651,605 1671,609 1682,614 1692,612 1702,609 1723,594 1743,572 1764,551" />
                <path d="M975 353.500h835" stroke="#e8281e" />
                <path d="M1085 558.500h725" stroke="#e00000" strokeDasharray="1 1" />
                <text x="975" y="565" fontSize="14" fill="#ff1e1e">376,140 / 1,90 %</text>
              </Chart>
              <Baseline $color="#4593e8" />
              <DrawingTools names={['Ligne De ...', 'Ligne S/r', 'Cours', ...baseTools]} slots={5} />
              <Footer fav />
            </Lowered>
          </TwoCharts>
        </Body>
      </Workspace>

      <Workspace $pad="1px 3px 3px 0">
        <Fill>
          <Panel>
            <ChartHead name="US NDAQ 100" lead={<Circled>5</Circled>} dimGrip add={false} tools={false} />
            <Toolbar d={{ unit: '5 minutes', unitWidth: 85, quick: [['10s', 25], ['1m'], ['5m']], span: '7 heures', spanWidth: 90, periods: [['1S'], ['1Mo', 28]], models: ['1', '2', '3', '4', '5'], price: 'Vente', priceWidth: 74, settings: true }} />
            <Chart
              view={[1921, 73, 1834, 915]}
              axis={84}
              axisBg="#fcfcfc"
              plotBg="linear-gradient(#fafafa, #fff)"
              marker={3471}
              times={[['10:00', 2156], ['11:00', 2329], ['12:00', 2504], ['13:00', 2679], ['14:00', 2853], ['15:00', 3029], ['16:00', 3203], ['17:00', 3378], ['18:00', 3552], ['19:00', 3728], ['24 Mar 2025 19:45:00', 2002, true]]}
              prices={[['20,190.00', 174], ['20,160.00', 293], ['20,130.00', 412], ['20,100.00', 531], ['20,070.00', 650], ['20,040.00', 769], ['20,042.56', 755, 'gray'], ['20,010.00', 887], ['20,140.64', 369, 'last']]}
            >
              <rect x="1921" y="73" width="1834" height="167" fill="#e3f6fb" />
              <path d="M1921 240.500h1834" stroke="#27c6dd" strokeDasharray="2 1" />
              <Candles data={ndaq5m} x0={1972.5} pitch={14.548} width={11} up="#1a80b0" down="#dbaa32" />
              <path d="M1921 369.500h1834" stroke="#e8281e" />
            </Chart>
            <DrawingTools names={['Ligne De ...', 'Ligne S/r', 'Cours', 'Fixe', ...baseTools]} slots={21} />
            <Footer fav />
          </Panel>
        </Fill>
      </Workspace>

      <Workspace $pad="0 0 0 2px">
        <Header brandWidth={136} account="13201555" ctaWidth={135} cta={'Ouvrir un\nCompte Réel'} ctaIcon="addUser" tabs={[{ label: 'Multi-Graphiques', width: 132, active: true }]} />
        <Body>
          <Sidebar />
          <DeskFrame>
            <Desk>
              {tiles.map(t => <Tile key={t.name} t={t} />)}
              <Placed $col={1} $cols={39} $row={9} $rows={60}>
                <Panel>
                  <ChartHead name="US NDAQ 100 - Juin 2025" lead={<Circled>1</Circled>} pts="284,25" sell="20 346,50" buy="20 348,50" spread="2,00" drops={false} gauge />
                  <Toolbar d={{ unit: '5 minutes', unitWidth: 85, quick: [['10s', 25], ['1m'], ['5m']], span: '4 heures', spanWidth: 90, periods: [['1S'], ['1Mo', 28], ['3Mo', 28]], models: ['1', '2', '3', '4', '5'], price: 'Achat', priceWidth: 74, settings: true }} />
                  <Chart
                    view={[41, 1315, 1156, 670]}
                    axis={87}
                    axisBg="#fff"
                    plotBg="linear-gradient(#fafafa, #fff)"
                    marker={1121}
                    times={[['14:00', 165], ['15:00', 432], ['16:00', 699], ['17:00', 966]]}
                    prices={[['20 400,00', 1420], ['20 370,00', 1534], ['20 340,00', 1648], ['20 310,00', 1762], ['20 297,13', 1809, 'gray'], ['20 280,00', 1876], ['20 348,50', 1615, 'last']]}
                  >
                    <Candles data={juin5m} x0={53} pitch={22.25} width={17} up="#109fb9" down="#cf9a1a" />
                    <path d="M41 1582h1156" stroke="#00b8ff" strokeWidth="2" />
                    <path d="M41 1605h1156" stroke="#ffa500" strokeWidth="2" strokeDasharray="5 3" />
                    <path d="M41 1615.500h1156" stroke="#e8281e" />
                    <path d="M745.500 1487.500h162v25h-162z" fill="#fff" stroke="#000" />
                    <path d="M908 1487l12 13-12 13z" />
                    <text x="764" y="1507" fontSize="20" fontWeight="700">NASDAQ 100</text>
                  </Chart>
                  <DrawingTools names={['Ligne De ...', 'Ligne S/r', 'Cours', 'Ligne', ...baseTools]} slots={10} />
                  <Footer fav />
                </Panel>
              </Placed>
              <WatchList row={10} rows={18} title="Indices" foot data={indices} ticked="US Small Cap 2000 - Juin 2025" />
              <WatchList row={28} rows={11} title="Asie" data={asie} />
              <WatchList row={39} rows={19} title="Obligations" foot data={obligations} />
              <WatchList row={58} rows={11} title="mMatières premières" data={matieres} />
            </Desk>
          </DeskFrame>
        </Body>
      </Workspace>

      <Workspace $pad="0 0 0 1px">
        <Header brandWidth={130} account="21978566" live ctaWidth={120} cta={'Ajouter\ndes Fonds'} ctaIcon="wallet" tabs={[{ label: 'Accueil', width: 93, active: true }, { label: 'Accueil (2)', width: 94 }, { label: 'Favoris', width: 93 }]} />
        <Body>
          <Sidebar live />
          <Fill>
            <PageTabs>
              <PageTab $on>US NDAQ 100</PageTab>
              <PageTab>Indices</PageTab>
              <PageTab>Positions (0)</PageTab>
            </PageTabs>
            <Panel>
              <ChartHead name="US NDAQ 100" lead={<Circled>1</Circled>} gauge />
              <Toolbar d={{ unit: '10 secondes', unitWidth: 90, quick: [['10s', 25], ['1m'], ['5m']], span: '-', spanWidth: 90, periods: [['1S'], ['1Mo', 28]], models: ['1', '2', '3', '4', '5'], price: 'Vente', priceWidth: 74, settings: true }} />
              <Chart
                view={[1956, 1221, 1799, 922]}
                axis={86}
                axisBg="#fff"
                plotBg="linear-gradient(#fafafa, #fff)"
                marker={3675}
                times={[['16:55', 2163], ['17:00', 2345], ['17:05', 2527], ['17:10', 2708], ['17:15', 2889], ['17:20', 3070], ['17:25', 3251], ['17:30', 3433], ['17:35', 3614], ['24 mars 2025 17:08:10', 2618, true]]}
                prices={[['20 180,00', 1276], ['20 170,00', 1395], ['20 160,00', 1514], ['20 150,00', 1634], ['20 140,00', 1753], ['20 130,00', 1873], ['20 128,59', 1890, 'amber'], ['20 126,50', 1913, 'gray'], ['20 120,00', 1993], ['20 110,00', 2112], ['20 140,64', 1747, 'last']]}
              >
                <Candles data={ndaq10s} x0={1958.9} pitch={6.05} width={3} up="#1a80b0" down="#dbaa32" />
                <path d="M2618.500 1221v922M1956 1913.500h1799" stroke="#9a9a9a" />
                <path d="M1956 1747.500h1799" stroke="#e8281e" />
                <path d="M1956 1890h1799" stroke="#f0a020" strokeWidth="2" strokeDasharray="5 4" />
                <g fontSize="15" fill="#dbaa32">
                  <text x="1963" y="1241" fill="#000" fontWeight="700">O:</text><text x="1980" y="1241">20 172,77</text>
                  <text x="2060" y="1241" fill="#000" fontWeight="700">H:</text><text x="2078" y="1241">20 173,02</text>
                  <text x="2158" y="1241" fill="#000" fontWeight="700">L:</text><text x="2176" y="1241">20 169,43</text>
                  <text x="2256" y="1241" fill="#000" fontWeight="700">C:</text><text x="2274" y="1241">20 170,17</text>
                </g>
              </Chart>
              <Footer />
            </Panel>
          </Fill>
        </Body>
      </Workspace>
    </Screen>
  );
}
